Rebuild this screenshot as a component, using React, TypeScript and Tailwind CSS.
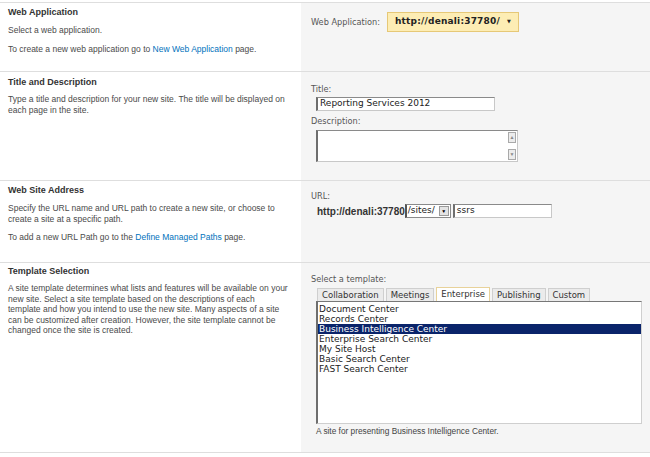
import React from "react";

const left = "font-['Liberation_Sans',Arial,sans-serif] text-[8.5px] leading-[11px] text-[#4a4a4a] whitespace-nowrap";
const head = "font-bold text-[9px] text-[#333333]";
const label = "font-['DejaVu_Sans',Verdana,sans-serif] text-[8.2px] leading-[11px] text-[#555555]";
const ctl = "font-['DejaVu_Sans',Verdana,sans-serif] text-[9px] text-[#222222]";
const field = "border border-[#c8c8c8] border-l-2 border-l-[#6e6e6e] border-t-[#8a8a8a] bg-white";

function Row({ h, extra, l, r }: { h: string; extra?: string; l: React.ReactNode; r: React.ReactNode }) {
  return (
    <div className={`grid grid-cols-[301px_1fr] border-t border-[#dedede] ${h} ${extra ?? ""}`}>
      <div className={`pl-[8px] ${left}`}>{l}</div>
      <div className="bg-[#f5f5f5] pl-[10px]">{r}</div>
    </div>
  );
}

const templates = [
  "Document Center",
  "Records Center",
  "Business Intelligence Center",
  "Enterprise Search Center",
  "My Site Host",
  "Basic Search Center",
  "FAST Search Center",
];

const tabs = ["Collaboration", "Meetings", "Enterprise", "Publishing", "Custom"];

export default function App() {
  return (
    <div className="w-[650px] h-[457px] bg-white pt-[2px] overflow-hidden">
      {/* Web Application */}
      <Row
        h="h-[69px]"
        l={
          <div className="pt-[4px]">
            <div className={head}>Web Application</div>
            <div className="mt-[7px]">Select a web application.</div>
            <div className="mt-[8px]">
              To create a new web application go to{" "}
              <span className="text-[#0072bc]">New Web Application</span> page.
            </div>
          </div>
        }
        r={
          <div className="flex items-center gap-[7px] pt-[9px]">
            <span className={label}>Web Application:</span>
            <div className="flex h-[20px] w-[132px] items-center border border-[#e6c877] bg-[#fdedb4] pl-[7px] font-['DejaVu_Sans',Verdana,sans-serif] text-[9px] font-bold tracking-[0.2px] text-[#222]">
              http://denali:37780/
              <span className="ml-[7px] text-[5px] font-normal">▼</span>
            </div>
          </div>
        }
      />

      {/* Title and Description */}
      <Row
        h="h-[109px]"
        l={
          <div className="pt-[5px]">
            <div className={head}>Title and Description</div>
            <div className="mt-[6px]">
              Type a title and description for your new site. The title will be displayed on
              <br />
              each page in the site.
            </div>
          </div>
        }
        r={
          <div className="pt-[12px]">
            <div className={label}>Title:</div>
            <div className={`ml-[5px] mt-[2px] flex h-[14px] w-[179px] items-center pl-[2px] ${field}`}>
              <span className={ctl}>Reporting Services 2012</span>
            </div>
            <div className={`${label} mt-[5px]`}>Description:</div>
            <div className={`ml-[5px] mt-[3px] flex h-[32px] w-[202px] justify-end ${field}`}>
              <div className="flex w-[9px] flex-col justify-between py-[1px] pr-[1px]">
                <div className="flex h-[11px] w-[8px] items-center justify-center border border-[#a9a9a9] bg-[#ececec] text-[5px] leading-none text-[#888]">▲</div>
                <div className="flex h-[11px] w-[8px] items-center justify-center border border-[#a9a9a9] bg-[#ececec] text-[5px] leading-none text-[#888]">▼</div>
              </div>
            </div>
          </div>
        }
      />

      {/* Web Site Address */}
      <Row
        h="h-[82px]"
        l={
          <div className="pt-[4px]">
            <div className={head}>Web Site Address</div>
            <div className="mt-[7px]">
              Specify the URL name and URL path to create a new site, or choose to
              <br />
              create a site at a specific path.
            </div>
            <div className="mt-[7px]">
              To add a new URL Path go to the <span className="text-[#0072bc]">Define Managed Paths</span> page.
            </div>
          </div>
        }
        r={
          <div className="pt-[10px]">
            <div className={label}>URL:</div>
            <div className="ml-[6px] mt-[2px] flex h-[14px] items-center">
              <span className="font-['Liberation_Sans',Arial,sans-serif] text-[10px] font-bold text-[#333]">
                http://denali:37780
              </span>
              <div className="flex h-[14px] w-[46px] items-center border border-[#8a8a8a] border-l-2 border-l-[#555] bg-white">
                <span className={`${ctl} pl-[1px]`}>/sites/</span>
                <div className="ml-auto mr-[1px] flex h-[10px] w-[10px] items-center justify-center border border-[#9a9a9a] bg-[#e4e4e4] text-[5px] leading-none text-black">▼</div>
              </div>
              <div className={`ml-[2px] flex h-[14px] w-[99px] items-center pl-[2px] ${field}`}>
                <span className={ctl}>ssrs</span>
              </div>
            </div>
          </div>
        }
      />

      {/* Template Selection */}
      <Row
        h="h-[191px]"
        extra="border-b"
        l={
          <div className="pt-[3px]">
            <div className={head}>Template Selection</div>
            <div className="mt-[6px] leading-[10.5px]">
              A site template determines what lists and features will be available on your
              <br />
              new site. Select a site template based on the descriptions of each
              <br />
              template and how you intend to use the new site. Many aspects of a site
              <br />
              can be customized after creation. However, the site template cannot be
              <br />
              changed once the site is created.
            </div>
          </div>
        }
        r={
          <div className="pt-[11px]">
            <div className={label}>Select a template:</div>
            <div className="ml-[6px] mt-[2px] flex items-end gap-[2px]">
              {tabs.map((t) => (
                <div
                  key={t}
                  className={
                    t === "Enterprise"
                      ? "flex h-[14px] items-center border border-b-0 border-[#e8d29a] bg-white px-[4px] font-['DejaVu_Sans',Verdana,sans-serif] text-[8.5px] text-[#333]"
                      : "flex h-[13px] items-center border border-b-0 border-[#cfcfcf] bg-[#ebebeb] px-[4px] font-['DejaVu_Sans',Verdana,sans-serif] text-[8.5px] text-[#333]"
                  }
                >
                  {t}
                </div>
              ))}
            </div>
            <div className="ml-[5px] h-[123px] w-[326px] border border-[#cfcfcf] border-l-2 border-l-[#6e6e6e] border-t-[#777] bg-white pt-[2px]">
              {templates.map((t) => (
                <div
                  key={t}
                  className={`h-[10px] pl-[1px] leading-[10px] ${ctl} ${
                    t === "Business Intelligence Center" ? "bg-[#0a246a] text-white" : ""
                  }`}
                >
                  {t}
                </div>
              ))}
            </div>
            <div className="ml-[5px] mt-[2px] font-['Liberation_Sans',Arial,sans-serif] text-[8.3px] leading-[11px] text-[#444]">
              A site for presenting Business Intelligence Center.
            </div>
          </div>
        }
      />
    </div>
  );
}
